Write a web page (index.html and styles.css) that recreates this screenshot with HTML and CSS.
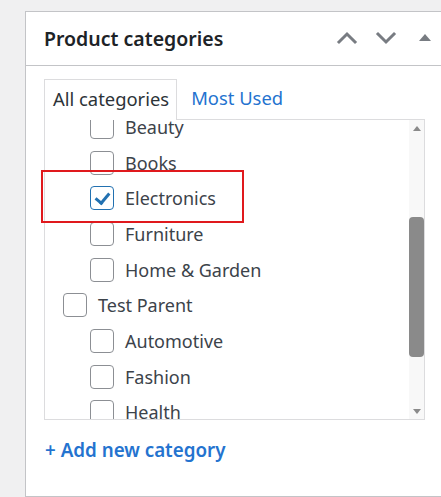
FILE: index.html
```html
<!DOCTYPE html>
<html lang="en">
<head>
  <meta charset="UTF-8">
  <meta name="viewport" content="width=device-width, initial-scale=1.0">
  <title>Product categories</title>
  <link rel="stylesheet" href="styles.css">
</head>
<body>
  <div class="postbox">
    <div class="postbox-header">
      <h2 class="postbox-title">Product categories</h2>
      <div class="handle-actions">
        <button class="handle-btn" aria-label="Move up">
          <svg width="22" height="14" viewBox="0 0 22 14" fill="none" stroke="currentColor" stroke-width="3" stroke-linecap="square">
            <path d="M3 11 L11 3 L19 11"/>
          </svg>
        </button>
        <button class="handle-btn" aria-label="Move down">
          <svg width="22" height="14" viewBox="0 0 22 14" fill="none" stroke="currentColor" stroke-width="3" stroke-linecap="square">
            <path d="M3 3 L11 11 L19 3"/>
          </svg>
        </button>
        <button class="handle-btn" aria-label="Toggle panel">
          <svg width="14" height="10" viewBox="0 0 14 10" fill="currentColor">
            <path d="M7 1 L13 8 L1 8 Z"/>
          </svg>
        </button>
      </div>
    </div>

    <div class="inside">
      <div class="tabs">
        <div class="tab active">All categories</div>
        <div class="tab"><a href="#">Most Used</a></div>
      </div>

      <div class="tabs-panel">
        <ul class="category-list">
          <li class="child"><span class="checkbox"></span>Beauty</li>
          <li class="child"><span class="checkbox"></span>Books</li>
          <li class="child"><span class="checkbox checked"></span>Electronics</li>
          <li class="child"><span class="checkbox"></span>Furniture</li>
          <li class="child"><span class="checkbox"></span>Home &amp; Garden</li>
          <li><span class="checkbox"></span>Test Parent</li>
          <li class="child"><span class="checkbox"></span>Automotive</li>
          <li class="child"><span class="checkbox"></span>Fashion</li>
          <li class="child"><span class="checkbox"></span>Health</li>
        </ul>
        <div class="scrollbar">
          <span class="arrow up"></span>
          <div class="track"><span class="thumb"></span></div>
          <span class="arrow down"></span>
        </div>
        <div class="highlight"></div>
      </div>

      <a class="add-new" href="#">+ Add new category</a>
    </div>
  </div>
</body>
</html>
```

FILE: styles.css
```css
* {
  margin: 0;
  padding: 0;
  box-sizing: border-box;
}

body {
  background: #f0f0f1;
  font-family: "Noto Sans", "Open Sans", sans-serif;
  color: #3c434a;
  padding: 11px 0 0 25px;
  overflow: hidden;
  height: 497px;
}

.postbox {
  width: 420px;
  height: 486px;
  background: #fff;
  border: 1px solid #c3c4c7;
}

.postbox-header {
  display: flex;
  align-items: center;
  height: 54px;
  border-bottom: 1px solid #c3c4c7;
  padding-left: 18px;
}

.postbox-title {
  flex: 1;
  font-size: 19.5px;
  font-weight: 600;
  color: #1d2327;
  margin-top: -1px;
}

.handle-actions {
  display: flex;
  margin-top: -2px;
}

.handle-btn {
  width: 39px;
  height: 36px;
  border: none;
  background: none;
  color: #787c82;
  display: flex;
  align-items: center;
  justify-content: center;
}

.inside {
  padding: 13px 19px 0 18px;
}

.tabs {
  display: flex;
  align-items: flex-end;
  height: 40px;
}

.tab {
  height: 40px;
  padding: 0 7px;
  font-size: 18.4px;
  line-height: 38px;
}

.tab.active {
  border: 1px solid #dcdcde;
  border-bottom: none;
  background: #fff;
  color: #2c3338;
  position: relative;
  z-index: 1;
  margin-bottom: -1px;
  height: 41px;
  padding-left: 8px;
}

.tab a {
  color: #2473cf;
  text-decoration: none;
  margin-left: 7px;
}

.tabs-panel {
  position: relative;
  display: flex;
  height: 301px;
  border: 1px solid #dcdcde;
}

.category-list {
  flex: 1;
  list-style: none;
  overflow: hidden;
}

.category-list li {
  display: flex;
  align-items: center;
  gap: 11px;
  height: 35.7px;
  padding-left: 18px;
  font-size: 18px;
}

.category-list li:first-child {
  margin-top: -11px;
}

.category-list li.child {
  padding-left: 45px;
}

.checkbox {
  width: 24px;
  height: 24px;
  border: 1px solid #8c8f94;
  border-radius: 4px;
  background: #fff;
  flex-shrink: 0;
  position: relative;
}

.checkbox.checked {
  border-color: #2271b1;
}

.checkbox.checked::after {
  content: "";
  position: absolute;
  left: 7px;
  top: 3px;
  width: 6px;
  height: 11px;
  border: solid #2271b1;
  border-width: 0 3px 3px 0;
  transform: rotate(40deg);
}

.scrollbar {
  width: 15px;
  background: #f8f8f8;
  display: flex;
  flex-direction: column;
  align-items: center;
}

.arrow {
  width: 0;
  height: 0;
  border-left: 4px solid transparent;
  border-right: 4px solid transparent;
}

.arrow.up {
  border-bottom: 5px solid #8a8a8a;
  margin-top: 6px;
}

.arrow.down {
  border-top: 5px solid #8a8a8a;
  margin-bottom: 5px;
}

.track {
  flex: 1;
  width: 100%;
  display: flex;
  justify-content: center;
  padding-top: 86px;
  padding-bottom: 52px;
}

.thumb {
  width: 8px;
  flex: 1;
  background: #8a8a8a;
  border-radius: 4px;
}

.highlight {
  position: absolute;
  left: -4px;
  top: 50px;
  width: 203px;
  height: 53px;
  border: 2px solid #e0191d;
}

.add-new {
  display: block;
  margin-top: 17px;
  font-size: 18.8px;
  font-weight: 600;
  color: #2473cf;
  text-decoration: none;
  margin-left: 1px;
}
```
